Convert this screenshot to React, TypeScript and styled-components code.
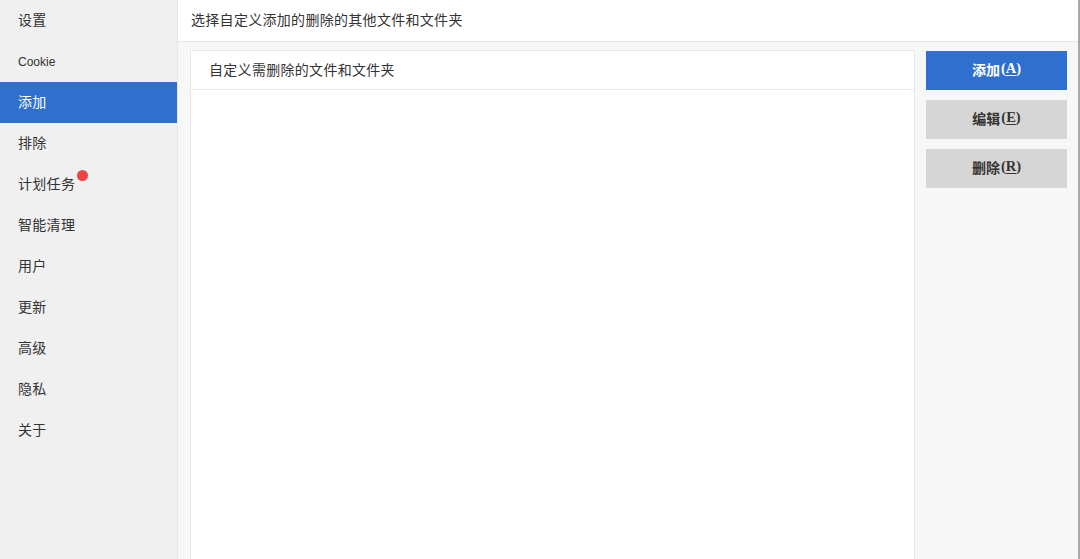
import React from 'react'
import styled, { createGlobalStyle } from 'styled-components'

const GlobalStyle = createGlobalStyle`
  html, body {
    margin: 0;
    padding: 0;
    height: 100%;
    background: #ffffff;
  }
  #root {
    height: 100%;
  }
  * {
    box-sizing: border-box;
  }
`

const Window = styled.div`
  display: flex;
  height: 100vh;
  font-family: 'Noto Sans CJK SC', 'Liberation Sans', sans-serif;
  color: #333333;
  border-right: 2px solid #a8a8a8;
  overflow: hidden;
`

const Sidebar = styled.nav`
  width: 178px;
  flex-shrink: 0;
  background: #f0f0f0;
  border-right: 1px solid #e6e6e6;
  display: flex;
  flex-direction: column;
`

const NavItem = styled.div<{ $active?: boolean; $latin?: boolean }>`
  position: relative;
  height: 41px;
  display: flex;
  align-items: center;
  padding: ${(p) => (p.$latin ? '0 0 0 18px' : '0 0 4px 18px')};
  font-size: ${(p) => (p.$latin ? '12px' : '14px')};
  font-family: ${(p) =>
    p.$latin ? "'Liberation Sans', sans-serif" : "'Noto Sans CJK SC', sans-serif"};
  letter-spacing: ${(p) => (p.$latin ? '0' : '0.3px')};
  background: ${(p) => (p.$active ? '#2f6fd0' : 'transparent')};
  color: ${(p) => (p.$active ? '#ffffff' : '#333333')};
`

const NavLabel = styled.span`
  position: relative;
`

const RedDot = styled.span`
  position: absolute;
  top: -3px;
  right: -13px;
  width: 11px;
  height: 11px;
  border-radius: 50%;
  background: #ef4343;
`

const Main = styled.div`
  flex: 1;
  display: flex;
  flex-direction: column;
  min-width: 0;
`

const Header = styled.div`
  height: 42px;
  flex-shrink: 0;
  display: flex;
  align-items: center;
  padding: 0 0 3px 13px;
  background: #ffffff;
  border-bottom: 1px solid #e6e6e6;
  font-size: 14px;
  letter-spacing: 0.3px;
`

const Body = styled.div`
  flex: 1;
  display: flex;
  gap: 11px;
  padding: 8px 11px 0 12px;
  background: #f7f7f7;
`

const ListPanel = styled.div`
  flex: 1;
  display: flex;
  flex-direction: column;
  background: #ffffff;
  border: 1px solid #e8e8e8;
  border-bottom: none;
`

const ListHeader = styled.div`
  height: 39px;
  display: flex;
  align-items: center;
  padding: 0 0 2px 18px;
  border-bottom: 1px solid #ececec;
  font-size: 14px;
  letter-spacing: 0.3px;
`

const ButtonColumn = styled.div`
  width: 141px;
  display: flex;
  flex-direction: column;
  gap: 10px;
  padding-top: 1px;
`

const ActionButton = styled.button<{ $primary?: boolean }>`
  height: 39px;
  border: none;
  display: flex;
  align-items: center;
  justify-content: center;
  font-family: 'Noto Sans CJK SC', sans-serif;
  font-size: 14px;
  font-weight: 700;
  background: ${(p) => (p.$primary ? '#2f6fd0' : '#d6d6d6')};
  color: ${(p) => (p.$primary ? '#ffffff' : '#333333')};
  padding: 0 0 4px;
`

const Accel = styled.span`
  font-family: 'Liberation Serif', serif;
  font-size: 14.5px;
  font-weight: 700;
  margin-left: 1px;

  u {
    text-underline-offset: 2px;
  }
`

const navItems = [
  { label: '设置' },
  { label: 'Cookie', latin: true },
  { label: '添加', active: true },
  { label: '排除' },
  { label: '计划任务', dot: true },
  { label: '智能清理' },
  { label: '用户' },
  { label: '更新' },
  { label: '高级' },
  { label: '隐私' },
  { label: '关于' },
]

const buttons = [
  { label: '添加', key: 'A', primary: true },
  { label: '编辑', key: 'E' },
  { label: '删除', key: 'R' },
]

export default function App() {
  return (
    <>
      <GlobalStyle />
      <Window>
        <Sidebar>
          {navItems.map((item) => (
            <NavItem key={item.label} $active={item.active} $latin={item.latin}>
              <NavLabel>
                {item.label}
                {item.dot && <RedDot />}
              </NavLabel>
            </NavItem>
          ))}
        </Sidebar>
        <Main>
          <Header>选择自定义添加的删除的其他文件和文件夹</Header>
          <Body>
            <ListPanel>
              <ListHeader>自定义需删除的文件和文件夹</ListHeader>
            </ListPanel>
            <ButtonColumn>
              {buttons.map((b) => (
                <ActionButton key={b.key} $primary={b.primary}>
                  {b.label}
                  <Accel>
                    (<u>{b.key}</u>)
                  </Accel>
                </ActionButton>
              ))}
            </ButtonColumn>
          </Body>
        </Main>
      </Window>
    </>
  )
}
